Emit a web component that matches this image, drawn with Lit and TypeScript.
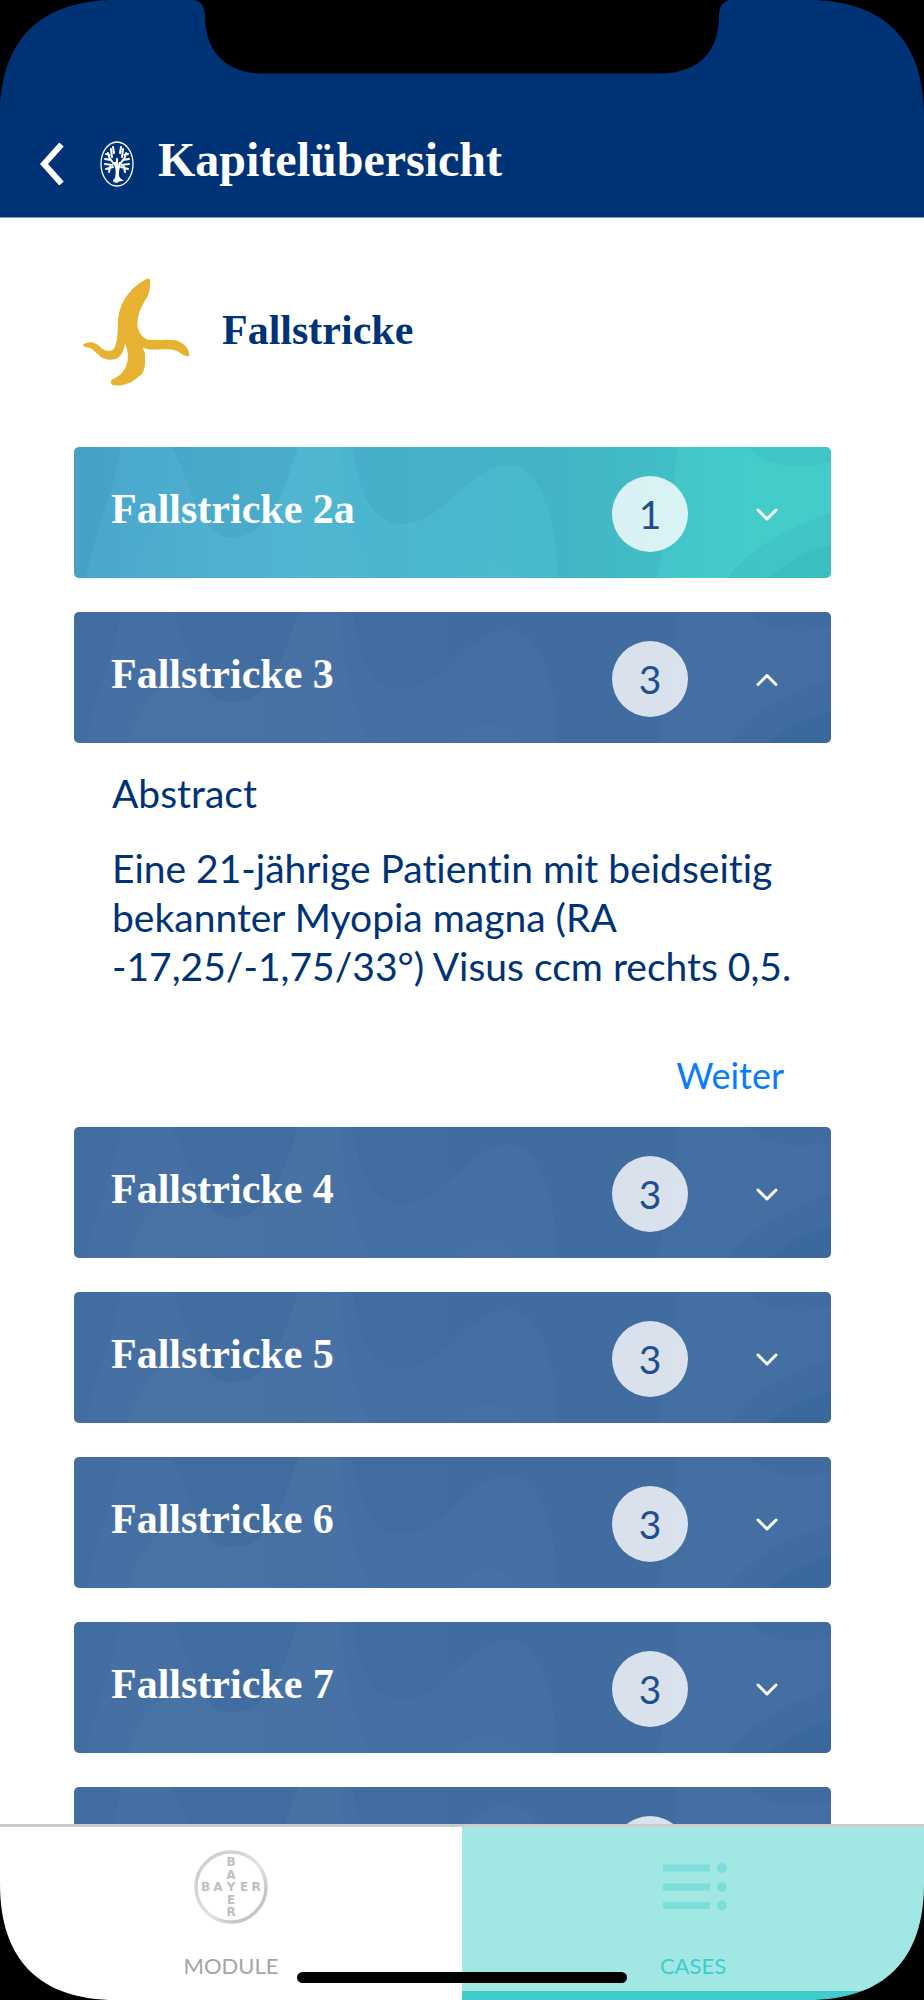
import { LitElement, html, css, svg } from "lit";
import { customElement, property, state } from "lit/decorators.js";
import { classMap } from "lit/directives/class-map.js";

interface CaseEntry {
  title: string;
  count: number;
  fresh?: boolean;
  lead?: string;
  code?: string;
  rest?: string;
}

const CASES: CaseEntry[] = [
  { title: "Fallstricke 2a", count: 1, fresh: true },
  {
    title: "Fallstricke 3",
    count: 3,
    lead: "Eine 21-jährige Patientin mit beidseitig bekannter Myopia magna (RA",
    code: "-17,25/-1,75/33°)",
    rest: "Visus ccm rechts 0,5.",
  },
  { title: "Fallstricke 4", count: 3 },
  { title: "Fallstricke 5", count: 3 },
  { title: "Fallstricke 6", count: 3 },
  { title: "Fallstricke 7", count: 3 },
  { title: "Fallstricke 8", count: 3 },
];

@customElement("case-card")
export class CaseCard extends LitElement {
  @property({ attribute: false }) entry!: CaseEntry;
  @property({ type: Boolean, reflect: true }) open = false;

  static styles = css`
    :host {
      display: block;
    }
    .card {
      position: relative;
      display: flex;
      align-items: center;
      box-sizing: border-box;
      width: 100%;
      height: 131px;
      margin: 0;
      padding: 3px 53px 0 37px;
      border: 0;
      border-radius: 5px;
      overflow: hidden;
      background: linear-gradient(90deg, #4670a4, #446fa3 50%, #446fa3);
      color: #fff;
      font: inherit;
      text-align: left;
      cursor: pointer;
      --shade: 0.05;
    }
    .fresh {
      background: linear-gradient(90deg, #4ba6cc, #4db4d1 28%, #47bacb 60%, #44cccb 90%);
    }
    .waves {
      position: absolute;
      inset: 0;
      width: 100%;
      height: 100%;
    }
    .dark {
      fill: #003b60;
      opacity: var(--shade);
    }
    .light {
      fill: #fff;
      opacity: 0.02;
    }
    .title {
      position: relative;
      flex: 1;
      padding-bottom: 10px;
      font: bold 42px/48px "Liberation Serif", serif;
    }
    .badge {
      position: relative;
      width: 76px;
      margin-right: 68px;
      border-radius: 50%;
      background: rgba(255, 255, 255, 0.8);
      color: #1f4f8c;
      font: 39px/76px Lato, sans-serif;
      text-align: center;
    }
    .chevron {
      position: relative;
      width: 22px;
      height: 13px;
      fill: none;
      stroke: #fff;
      stroke-width: 3;
      stroke-linecap: round;
      stroke-linejoin: round;
    }
    .panel {
      display: flex;
      flex-direction: column;
      padding: 26px 39px 0 38px;
      color: #003375;
      font: 39px/49px Lato, sans-serif;
      font-variant-ligatures: none;
    }
    h3,
    p {
      margin: 0 0 26px;
      font: inherit;
      font-variant-ligatures: none;
    }
    p {
      margin-bottom: 60px;
    }
    .code {
      white-space: nowrap;
    }
    a {
      align-self: flex-end;
      margin-right: 8px;
      color: #087cff;
      font-size: 36px;
      text-decoration: none;
    }
  `;

  private toggle() {
    this.dispatchEvent(new CustomEvent("toggle-case", { bubbles: true, composed: true }));
  }

  render() {
    const e = this.entry;
    return html`
      <button
        class=${classMap({ card: true, fresh: !!e.fresh })}
        aria-expanded=${this.open ? "true" : "false"}
        @click=${this.toggle}
      >
        <svg class="waves" viewBox="0 0 757 131" preserveAspectRatio="none" aria-hidden="true">
          <path class="dark" d="M0 0H47C40 45 22 80 12 131H0Z" />
          <path class="dark" d="M98 0C118 40 126 90 157 90C196 90 208 50 224 0Z" />
          <path class="light" d="M54 131C70 80 90 70 120 60C136 84 140 90 157 90C196 90 208 50 224 0H266C270 60 280 100 297 131Z" />
          <path class="dark" d="M279 0C285 50 300 77 328 77C370 77 395 18 434 18C470 18 482 80 484 131H552V0Z" />
          <path class="light" d="M379 131C400 106 428 106 447 131Z" />
          <path class="dark" d="M552 0H603C600 50 592 90 583 131H552Z" />
          <path class="dark" d="M675 0C690 20 725 22 757 15V0Z" />
          <path class="dark" d="M654 131C680 95 720 80 757 66V131Z" />
          <path class="dark" d="M695 131C715 113 735 104 757 98V131Z" />
        </svg>
        <span class="title">${e.title}</span>
        <span class="badge">${e.count}</span>
        <svg class="chevron" viewBox="0 0 22 13" aria-hidden="true">
          ${this.open ? svg`<path d="M2 11.5L11 2.5L20 11.5" />` : svg`<path d="M2 2L11 11L20 2" />`}
        </svg>
      </button>
      ${this.open
        ? html`<div class="panel">
            <h3>Abstract</h3>
            <p>${e.lead} <span class="code">${e.code}</span> ${e.rest}</p>
            <a href="#weiter">Weiter</a>
          </div>`
        : null}
    `;
  }
}

@customElement("app-root")
export class AppRoot extends LitElement {
  @state() private openIndex = 1;

  static styles = css`
    :host {
      display: block;
      height: 100vh;
    }
    .screen {
      position: relative;
      display: flex;
      flex-direction: column;
      height: 100%;
      overflow: hidden;
      background: #fff;
    }
    header {
      display: flex;
      align-items: center;
      padding: 132px 40px 21px;
      border-bottom: 1px solid #8093b4;
      background: #003375;
      color: #fff;
    }
    .back {
      display: flex;
      margin: 0 36px 0 0;
      padding: 0;
      border: 0;
      background: none;
      cursor: pointer;
    }
    .back svg {
      width: 24px;
      height: 42px;
      fill: none;
      stroke: #fff;
      stroke-width: 6;
    }
    .tree {
      width: 34px;
      height: 46px;
      margin-right: 24px;
      fill: none;
      stroke: #fff;
    }
    h1 {
      margin: 0;
      padding-bottom: 8px;
      font: bold 48px/56px "Liberation Serif", serif;
    }
    main {
      flex: 1;
      min-height: 0;
      overflow-y: auto;
      scrollbar-width: none;
      padding: 60px 93px 0 74px;
    }
    .chapter {
      display: flex;
      align-items: center;
      gap: 32px;
      margin: 0 9px 61px;
    }
    .banana {
      width: 107px;
      height: 108px;
      fill: #e7b231;
    }
    h2 {
      margin: 0;
      padding-bottom: 4px;
      color: #003375;
      font: bold 42px/48px "Liberation Serif", serif;
    }
    ul {
      margin: 0;
      padding: 0;
      list-style: none;
    }
    li {
      margin-bottom: 34px;
    }
    li.expanded {
      margin-bottom: 27px;
    }
    nav {
      display: grid;
      grid-template-columns: 1fr 1fr;
      height: 173px;
      border-top: 3px solid #cacaca;
      font: 22px/28px Lato, sans-serif;
    }
    .tab {
      display: flex;
      flex-direction: column;
      align-items: center;
      box-sizing: border-box;
      padding-top: 22px;
      border-bottom: 9px solid transparent;
      color: #a5a5a5;
      text-decoration: none;
    }
    .tab svg {
      width: 76px;
      height: 76px;
      margin-bottom: 27px;
    }
    .active {
      border-color: #40cccb;
      background: #a1e7e4;
      color: #40cccb;
    }
    .ring {
      fill: none;
      stroke: url(#metal);
      stroke-width: 3.5;
    }
    .cross {
      fill: #c0c0c0;
      font: bold 12px "DejaVu Sans", sans-serif;
      text-anchor: middle;
    }
    .list {
      fill: #7bdedb;
    }
    .frame {
      position: absolute;
      pointer-events: none;
    }
    .corner {
      width: 116px;
      height: 116px;
    }
    .tl {
      top: 0;
      left: 0;
    }
    .tr {
      top: 0;
      right: 0;
      transform: scaleX(-1);
    }
    .bl {
      bottom: 0;
      left: 0;
      transform: scaleY(-1);
    }
    .br {
      right: 0;
      bottom: 0;
      transform: scale(-1);
    }
    .notch {
      top: 0;
      left: 50%;
      width: 540px;
      height: 74px;
      margin-left: -270px;
    }
    .home {
      bottom: 17px;
      left: 50%;
      width: 330px;
      height: 11px;
      margin-left: -165px;
      border-radius: 6px;
      background: #000;
    }
  `;

  private corner(name: string) {
    return html`<svg class="frame corner ${name}" viewBox="0 0 116 116" aria-hidden="true">
      <path d="M0 0H116C40 0 0 40 0 116Z" />
    </svg>`;
  }

  render() {
    return html`
      <div class="screen">
        <header>
          <button class="back" aria-label="Zurück">
            <svg viewBox="0 0 24 42"><path d="M21.5 1.5L4 21L21.5 40.5" /></svg>
          </button>
          <svg class="tree" viewBox="0 0 34 46" aria-hidden="true">
            <ellipse cx="17" cy="23" rx="16" ry="22" stroke-width="1.3" />
            <path d="M17 42C11 41 13 39 15 37C16 32 16 28 14.500 25L12 21H16L17 26L19 21H22L20 26C18.500 31 18.500 35 20 37L24 40C21 40 19 40 17 42Z" fill="#fff" stroke="none" />
            <path stroke-width="2" stroke-linecap="round" d="M17 26V18M14 23L9.500 17L8 12M11 19L5 18M12 16L11 8M14 12L13 6M12 24L5 23M13 26L6 28M10 26L9 31M20 23L24.500 17L26 12M23 19L29 18M22 16L23 8M20 12L21 6M22 24L29 23M21 26L28 28M24 26L25 31M9.500 14L6 13M24.500 14L28 13" />
          </svg>
          <h1>Kapitelübersicht</h1>
        </header>
        <main>
          <div class="chapter">
            <svg class="banana" viewBox="68 53 322 325" aria-hidden="true">
              <path d="M268 56C262 51 240 64 215 88C190 115 174 145 173 190C172 225 172 242 163 262C157 275 140 275 125 265C110 252 102 245 85 247C72 249 66 254 69 258C74 264 88 260 98 269C115 285 128 300 152 299C175 298 188 285 195 250C205 275 206 302 196 322C188 340 170 352 157 358C150 362 150 370 157 375C180 380 213 372 235 350C252 338 255 325 255 295C256 275 250 270 248 262C260 268 275 269 300 268C330 266 345 268 358 277C370 285 380 290 388 288C390 270 375 250 350 241C320 235 290 243 262 238C245 233 231 210 232 190C232 160 245 135 262 110C268 95 271 75 270 60Z" />
            </svg>
            <h2>Fallstricke</h2>
          </div>
          <ul>
            ${CASES.map(
              (entry, i) => html`<li class=${classMap({ expanded: this.openIndex === i })}>
                <case-card
                  .entry=${entry}
                  ?open=${this.openIndex === i}
                  @toggle-case=${() => (this.openIndex = this.openIndex === i ? -1 : i)}
                ></case-card>
              </li>`
            )}
          </ul>
        </main>
        <nav>
          <a class="tab" href="#module">
            <svg viewBox="0 0 76 76" aria-hidden="true">
              <defs>
                <linearGradient id="metal" x1="0" y1="0" x2="1" y2="1">
                  <stop offset="0" stop-color="#cdcdcd" />
                  <stop offset="0.3" stop-color="#d4d4d4" />
                  <stop offset="0.55" stop-color="#e4e4e4" />
                  <stop offset="0.8" stop-color="#c4c4c4" />
                  <stop offset="1" stop-color="#d4d4d4" />
                </linearGradient>
              </defs>
              <circle class="ring" cx="38" cy="38" r="35" />
              <g class="cross">
                <text x="12.500 25 38 51 63" y="42">BAYER</text>
                <text x="38" y="17">B</text>
                <text x="38" y="29.500">A</text>
                <text x="38" y="54.500">E</text>
                <text x="38" y="67">R</text>
              </g>
            </svg>
            MODULE
          </a>
          <a class="tab active" href="#cases" aria-current="page">
            <svg class="list" viewBox="0 0 76 76" aria-hidden="true">
              <path d="M8 15.500H55V22.500H8ZM8 34.500H55V41.500H8ZM8 53H55V60H8Z" />
              <circle cx="67" cy="19" r="5" />
              <circle cx="67" cy="38" r="5" />
              <circle cx="67" cy="56.500" r="5" />
            </svg>
            CASES
          </a>
        </nav>
        ${["tl", "tr", "bl", "br"].map((c) => this.corner(c))}
        <svg class="frame notch" viewBox="0 0 540 74" aria-hidden="true">
          <path d="M0 0C10 0 13 8 13 16C13 50 32 73.500 72 73.500H468C508 73.500 527 50 527 16C527 8 530 0 540 0Z" />
        </svg>
        <div class="frame home"></div>
      </div>
    `;
  }
}
